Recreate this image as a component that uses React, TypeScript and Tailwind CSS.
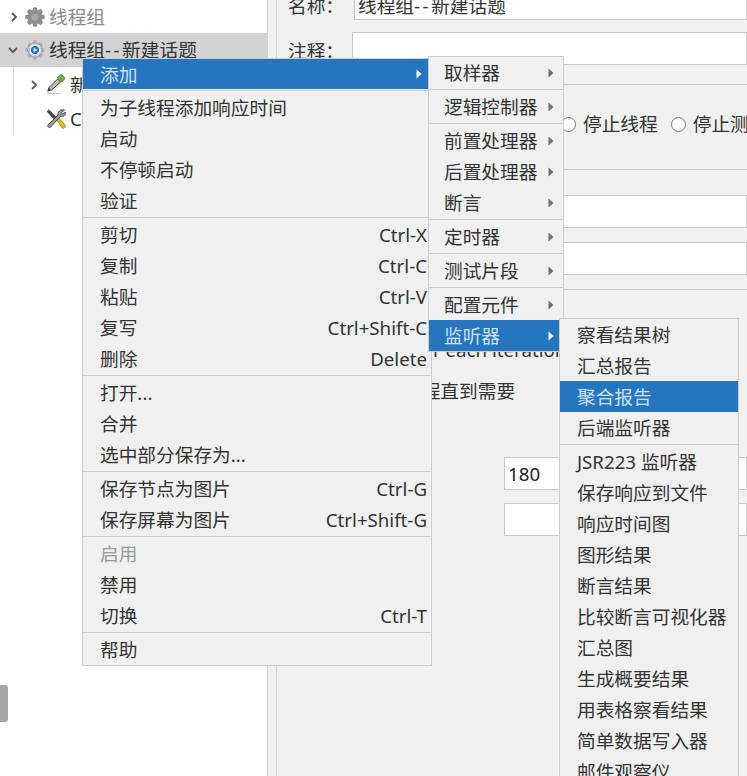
const fontStack = 'font-["Noto_Sans","Noto_Sans_CJK_SC",sans-serif]';

function Gear({ active }: { active: boolean }) {
  const teeth = [0, 45, 90, 135, 180, 225, 270, 315];
  return (
    <svg width="20" height="20" viewBox="0 0 20 20" className="shrink-0">
      {teeth.map((a) => (
        <rect key={a} x="8" y="0.5" width="4" height="19" rx="1" fill={active ? '#b4b8bc' : '#8f8f8f'} transform={`rotate(${a} 10 10)`} />
      ))}
      <circle cx="10" cy="10" r="7.2" fill={active ? '#d4d6d8' : '#8f8f8f'} stroke={active ? '#8f9396' : '#8f8f8f'} />
      {active ? (
        <>
          <circle cx="10" cy="10" r="4.6" fill="#2f6fc4" stroke="#fff" />
          <path d="M8.6 7.8 L12.6 10 L8.6 12.2 Z" fill="#dbe8f8" />
        </>
      ) : (
        <circle cx="10" cy="10" r="3.6" fill="#a5a5a5" />
      )}
    </svg>
  );
}

function Dropper() {
  return (
    <svg width="20" height="22" viewBox="0 0 20 22" className="shrink-0">
      <path d="M14.5 0.8 C16 0.3 19 3 18.8 4.8 L16 8.2 L11.2 3.6 Z" fill="#6fb04a" stroke="#47812c" strokeWidth="0.8" />
      <path d="M11.6 5 L14.6 8 L5 16.6 L2.4 14 Z" fill="#b9bcbd" stroke="#3c3c3c" strokeWidth="1" />
      <path d="M2.4 14 L5 16.6 L1.2 17.8 Z" fill="#222" />
      <path d="M0.5 19.5 H14" stroke="#c4c4c4" strokeWidth="1.4" />
    </svg>
  );
}

function Tools() {
  return (
    <svg width="20" height="21" viewBox="0 0 20 21" className="shrink-0">
      <path d="M1 2.5 L3 0.8 L11.8 10 L9.8 12 Z" fill="#4a4a4a" stroke="#2b2b2b" strokeWidth="0.5" />
      <path d="M10.5 10.5 L12.5 8.8 L19.5 16.5 C19.7 18 18 19.8 16.4 19.2 Z" fill="#ecb91d" stroke="#8a6b0c" strokeWidth="0.7" />
      <path d="M18.5 1 L15.6 3.6 L16.5 5 L19.4 3 C20 6.4 17 8.4 14.4 7.4 L5 17.6 C3.6 19.8 0.6 17.6 2.2 15.6 L12 6 C11.2 3 15 -0.2 18.5 1 Z" fill="#9a9a9a" stroke="#333" strokeWidth="0.8" />
    </svg>
  );
}

function Chevron({ open, className }: { open?: boolean; className?: string }) {
  return (
    <svg width="10" height="10" viewBox="0 0 10 10" className={className}>
      <path d={open ? 'M1 3 L5 7 L9 3' : 'M3 1 L7 5 L3 9'} fill="none" stroke="#5f5f5f" strokeWidth="2" />
    </svg>
  );
}

function Caret({ light }: { light?: boolean }) {
  return (
    <svg width="6" height="10" viewBox="0 0 6 10" className="shrink-0 block">
      <path d="M0.5 0.5 L5.5 5 L0.5 9.5 Z" fill={light ? '#ffffff' : '#6f6f6f'} />
    </svg>
  );
}

function MenuRow({ label, shortcut, arrow, active, disabled, h = 'h-[31px]', pl = 'pl-[17px]' }: { label: string; shortcut?: string; arrow?: boolean; active?: boolean; disabled?: boolean; h?: string; pl?: string }) {
  return (
    <div className={`${h} ${pl} flex items-center justify-between pr-[4px] whitespace-nowrap ${active ? 'bg-[#2675bf] text-[#cfe0f0]' : disabled ? 'text-[#9a9a9a]' : 'text-[#333333]'}`}>
      <span className="pt-[2px]">{label}</span>
      {shortcut && <span className="pt-[2px]">{shortcut}</span>}
      {arrow && <span className="pr-[5px]"><Caret light={active} /></span>}
    </div>
  );
}

function Sep() {
  return (
    <div className="h-[3px] flex items-center">
      <div className="h-px w-full bg-[#cdcdcd]" />
    </div>
  );
}

function Radio({ label }: { label: string }) {
  return (
    <div className="flex items-center gap-[7px] whitespace-nowrap">
      <span className="w-[15px] h-[15px] rounded-full border border-[#777] bg-white" />
      <span>{label}</span>
    </div>
  );
}

const mainMenu: ({ label: string; shortcut?: string; disabled?: boolean } | 'sep')[] = [
  { label: '为子线程添加响应时间' },
  { label: '启动' },
  { label: '不停顿启动' },
  { label: '验证' },
  'sep',
  { label: '剪切', shortcut: 'Ctrl-X' },
  { label: '复制', shortcut: 'Ctrl-C' },
  { label: '粘贴', shortcut: 'Ctrl-V' },
  { label: '复写', shortcut: 'Ctrl+Shift-C' },
  { label: '删除', shortcut: 'Delete' },
  'sep',
  { label: '打开...' },
  { label: '合并' },
  { label: '选中部分保存为...' },
  'sep',
  { label: '保存节点为图片', shortcut: 'Ctrl-G' },
  { label: '保存屏幕为图片', shortcut: 'Ctrl+Shift-G' },
  'sep',
  { label: '启用', disabled: true },
  { label: '禁用' },
  { label: '切换', shortcut: 'Ctrl-T' },
  'sep',
  { label: '帮助' },
];

const listeners = ['JSR223 监听器', '保存响应到文件', '响应时间图', '图形结果', '断言结果', '比较断言可视化器', '汇总图', '生成概要结果', '用表格察看结果', '简单数据写入器', '邮件观察仪'];

export default function App() {
  return (
    <div className={`relative w-[747px] h-[776px] overflow-hidden bg-white text-[18.7px] leading-none text-[#333333] ${fontStack}`}>
      <div className="flex h-full">
        {/* Tree */}
        <div className="w-[267px] shrink-0 relative bg-white">
          <div className="h-[33px] flex items-center pl-[9px]">
            <Chevron className="mr-[6px]" />
            <Gear active={false} />
            <span className="ml-[4px] pt-[2px] text-[#8c8c8c]">线程组</span>
          </div>
          <div className="h-[34px] flex items-center pl-[8px] bg-[#d3d3d3]">
            <Chevron open className="mr-[7px]" />
            <Gear active />
            <span className="ml-[4px] pt-[1px] whitespace-nowrap">线程组<span className="tracking-[2.5px]">--</span>新建话题</span>
          </div>
          <div className="ml-[13px] h-[68px] border-l border-[#d8d8d8]">
            <div className="h-[36px] flex items-center pl-[15px]">
              <Chevron className="mr-[7px]" />
              <Dropper />
              <span className="ml-[4px]">新</span>
            </div>
            <div className="h-[32px] flex items-center pl-[32px]">
              <Tools />
              <span className="ml-[4px]">C</span>
            </div>
          </div>
          <div className="absolute left-0 top-[685px] w-[8px] h-[37px] bg-[#a6a6a6] rounded-r-[3px]" />
        </div>

        {/* Divider */}
        <div className="w-[10px] shrink-0 bg-[#f0f0f0] border-x border-[#d3d3d3]" />

        {/* Form */}
        <div className="flex-1 min-w-0 bg-[#f0f0f0]">
          <div className="h-[33px] -mt-[13px] flex items-center pl-[11px]">
            <span className="w-[66px] shrink-0 pt-[5px]">名称：</span>
            <div className="flex-1 h-full bg-white border border-[#c8c8c8] pl-[3px] pt-[5px] flex items-center whitespace-nowrap">线程组<span className="tracking-[2.5px]">--</span>新建话题</div>
          </div>
          <div className="mt-[12px] h-[33px] flex items-center pl-[11px]">
            <span className="w-[64px] shrink-0 pt-[5px]">注释：</span>
            <div className="flex-1 h-full bg-white border border-[#c8c8c8]" />
          </div>
          <div className="mt-[19px] border-t border-[#cdcdcd]" />
          <div className="mt-[30px] h-[19px] pl-[284px] flex items-center gap-[13px] overflow-hidden">
            <Radio label="停止线程" />
            <Radio label="停止测试" />
          </div>
          <div className="mt-[35px] border-t border-[#cdcdcd]" />
          <div className="mt-[25px] ml-[200px] h-[33px] bg-white border border-[#c8c8c8]" />
          <div className="mt-[14px] ml-[200px] h-[33px] bg-white border border-[#c8c8c8]" />
          <div className="mt-[14px] border-t border-[#cdcdcd]" />
          <div className="mt-[51px] pl-[156px] whitespace-nowrap">r each iteration</div>
          <div className="mt-[22px] pl-[126px] whitespace-nowrap">线程直到需要</div>
          <div className="mt-[57px] ml-[227px] h-[33px] bg-white border border-[#c8c8c8] pl-[3px] flex items-center text-[#222]">180</div>
          <div className="mt-[13px] ml-[227px] h-[33px] bg-white border border-[#c8c8c8]" />
        </div>
      </div>

      {/* Context menu */}
      <div className="absolute left-[82px] top-[58px] w-[350px] bg-[#f0f0f0] border border-[#cdcdcd]">
        <MenuRow label="添加" arrow active h="h-[30px]" />
        <Sep />
        {mainMenu.map((item, i) =>
          item === 'sep' ? <Sep key={i} /> : <MenuRow key={i} label={item.label} shortcut={item.shortcut} disabled={item.disabled} />
        )}
      </div>

      {/* Add submenu */}
      <div className="absolute left-[428px] top-[56px] w-[136px] bg-[#f0f0f0] border border-[#cdcdcd]">
        <MenuRow label="取样器" arrow pl="pl-[15px]" />
        <Sep />
        <MenuRow label="逻辑控制器" arrow pl="pl-[15px]" />
        <Sep />
        <MenuRow label="前置处理器" arrow pl="pl-[15px]" />
        <MenuRow label="后置处理器" arrow pl="pl-[15px]" />
        <MenuRow label="断言" arrow pl="pl-[15px]" />
        <Sep />
        <MenuRow label="定时器" arrow pl="pl-[15px]" />
        <Sep />
        <MenuRow label="测试片段" arrow pl="pl-[15px]" />
        <Sep />
        <MenuRow label="配置元件" arrow pl="pl-[15px]" />
        <MenuRow label="监听器" arrow active pl="pl-[15px]" />
      </div>

      {/* Listener submenu */}
      <div className="absolute left-[559px] top-[318px] w-[180px] bg-[#f0f0f0] border border-[#cdcdcd] border-b-0">
        <MenuRow label="察看结果树" />
        <MenuRow label="汇总报告" />
        <MenuRow label="聚合报告" active />
        <MenuRow label="后端监听器" />
        <Sep />
        {listeners.map((name) => (
          <MenuRow key={name} label={name} />
        ))}
      </div>
    </div>
  );
}
